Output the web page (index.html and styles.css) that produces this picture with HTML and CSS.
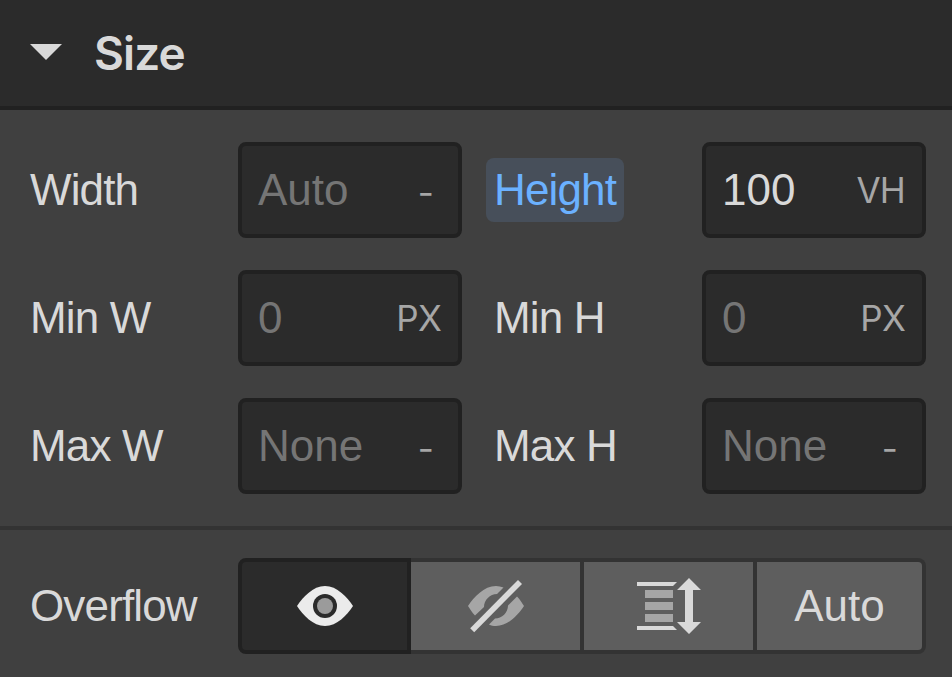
FILE: index.html
```html
<!DOCTYPE html>
<html lang="en">
<head>
    <meta charset="UTF-8">
    <meta name="viewport" content="width=device-width, initial-scale=1.0">
    <title>Size</title>
    <link rel="stylesheet" href="styles.css">
</head>
<body>
    <header class="panel-header">
        <svg class="arrow" width="32" height="16" viewBox="0 0 32 16"><path d="M0 0h32L16 16z"/></svg>
        <h1>Size</h1>
    </header>

    <section class="size-grid">
        <label><span class="label">Width</span></label>
        <div class="field"><span class="placeholder">Auto</span><span class="unit dash">-</span></div>
        <label><span class="label active">Height</span></label>
        <div class="field"><span class="value">100</span><span class="unit">VH</span></div>

        <label><span class="label">Min W</span></label>
        <div class="field"><span class="placeholder">0</span><span class="unit">PX</span></div>
        <label><span class="label">Min H</span></label>
        <div class="field"><span class="placeholder">0</span><span class="unit">PX</span></div>

        <label><span class="label">Max W</span></label>
        <div class="field"><span class="placeholder">None</span><span class="unit dash">-</span></div>
        <label><span class="label">Max H</span></label>
        <div class="field"><span class="placeholder">None</span><span class="unit dash">-</span></div>
    </section>

    <section class="overflow">
        <label><span class="label">Overflow</span></label>
        <div class="button-group">
            <button class="selected" aria-label="Visible">
                <svg width="64" height="64" viewBox="0 0 64 64">
                    <path fill="#ebebeb" d="M4 32C10 23 20 12 32 12s22 11 28 20c-6 9-16 20-28 20S10 41 4 32z"/>
                    <circle cx="32" cy="32" r="12" fill="#2b2b2b"/>
                    <circle cx="32" cy="32" r="8" fill="#9b9b9b"/>
                </svg>
            </button>
            <button aria-label="Hidden">
                <svg width="64" height="64" viewBox="0 0 64 64">
                    <path fill="#a6a6a6" d="M39.500 13.500L33 20C26 20 20 26 20 33L11 41.500C8 38.500 6 35 4 32C10 23 20 12 32 12C34.500 12 37 12.500 39.500 13.500z"/>
                    <path fill="#a6a6a6" d="M53 22.500C56 25.500 58 29 60 32C54 41 44 52 32 52C29.500 52 27 51.500 25 50.500L31 44.500C38 44.500 44 38.500 44 31.500z"/>
                    <path stroke="#d9d9d9" stroke-width="5.600" d="M8.200 56.200L56 8"/>
                </svg>
            </button>
            <button aria-label="Scroll">
                <svg width="64" height="64" viewBox="0 0 64 64">
                    <path fill="#d9d9d9" d="M0 8h40l-4 4H0zM0 52h36l4 4H0zM52 4l12 12h-8v32h8L52 60 40 48h8V16h-8z"/>
                    <path fill="#a6a6a6" d="M8 16h28v8H8zM8 28h28v8H8zM8 40h28v8H8z"/>
                </svg>
            </button>
            <button>Auto</button>
        </div>
    </section>
</body>
</html>
```
FILE: styles.css
```css
* {
    box-sizing: border-box;
}

body {
    margin: 0;
    min-height: 100vh;
    background-color: #404040;
    color: #d9d9d9;
    font-family: "Liberation Sans", Arial, sans-serif;
    font-size: 44px;
    line-height: 52px;
}

.panel-header {
    display: flex;
    align-items: center;
    gap: 32px;
    height: 110px;
    padding: 0 30px;
    background-color: #2b2b2b;
    border-bottom: 4px solid #212121;
}

.panel-header h1 {
    margin: 0;
    font-family: Inter, sans-serif;
    font-size: 46px;
    font-weight: 560;
    letter-spacing: -0.9px;
}

.arrow {
    fill: #d9d9d9;
    margin-bottom: 2px;
}

.size-grid {
    display: grid;
    grid-template-columns: 216px 248px 216px 224px;
    row-gap: 32px;
    padding: 32px 22px;
    border-bottom: 4px solid #333333;
}

label {
    display: flex;
    align-items: center;
}

.label {
    padding: 6px 8px;
    border-radius: 8px;
    letter-spacing: -0.85px;
}

.label.active {
    background-color: #474f5a;
    color: #6bb1ff;
}

.field {
    display: flex;
    align-items: center;
    justify-content: space-between;
    width: 224px;
    height: 96px;
    padding: 0 17px 0 16px;
    background-color: #2b2b2b;
    border: 4px solid #212121;
    border-radius: 8px;
}

.placeholder {
    color: #757575;
}

.unit {
    color: #a6a6a6;
    font-family: Inter, sans-serif;
    font-size: 35px;
    letter-spacing: -0.8px;
}

.dash {
    padding: 3px 8px 0 0;
}

.overflow {
    display: grid;
    grid-template-columns: 216px 688px;
    padding: 28px 22px 0;
}

.button-group {
    display: flex;
    height: 96px;
}

.button-group button {
    display: flex;
    align-items: center;
    justify-content: center;
    width: 173px;
    padding: 0;
    background-color: #5e5e5e;
    border: solid #333333;
    border-width: 4px 4px 4px 0;
    color: #d9d9d9;
    font: inherit;
}

.button-group .selected {
    background-color: #2b2b2b;
    border: 4px solid #212121;
    border-radius: 8px 0 0 8px;
}

.button-group button:last-child {
    width: 169px;
    border-radius: 0 8px 8px 0;
}
```
